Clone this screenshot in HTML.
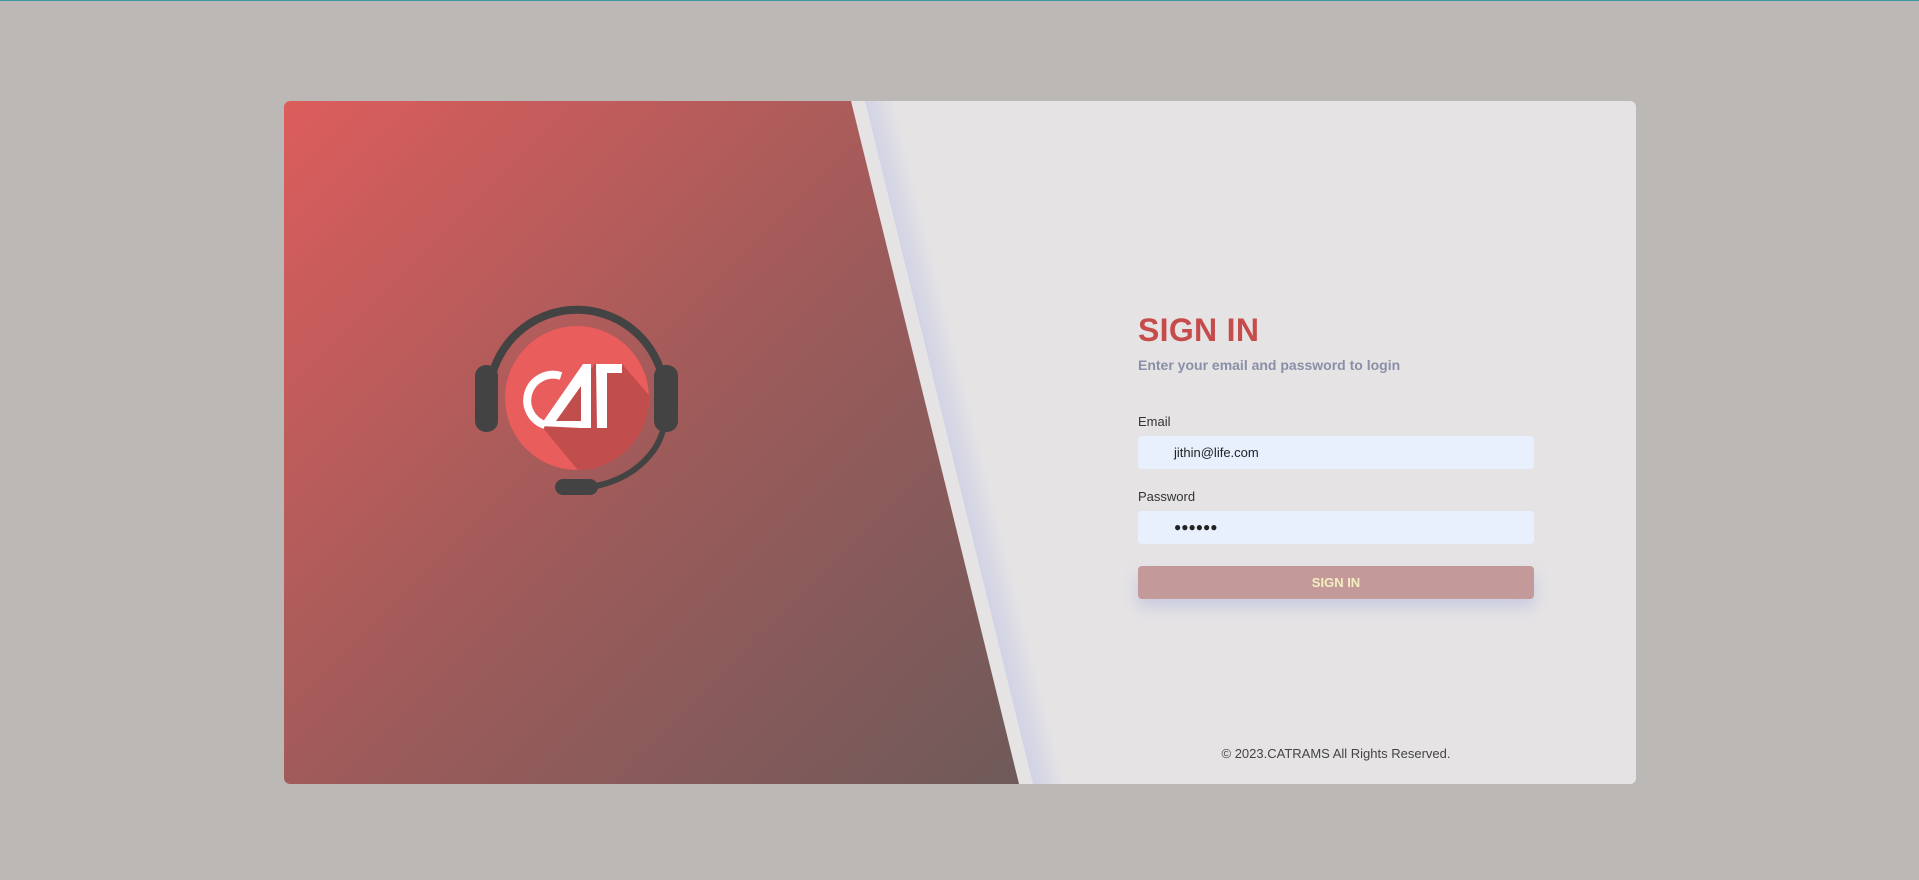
<!DOCTYPE html>
<html><head><meta charset="utf-8"><style>
html,body{margin:0;padding:0}
body{width:1919px;height:880px;background:#bcb8b6;position:relative;overflow:hidden;font-family:"Liberation Sans",sans-serif;border-top:1px solid #3a9aa0;box-sizing:border-box}
.card{position:absolute;left:284px;top:100px;width:1352px;height:683px;background:#e5e3e4;border-radius:6px;overflow:hidden}
.red{position:absolute;left:0;top:0;width:100%;height:100%;background:linear-gradient(135deg,#dc5d5c 0%,#9a5b5a 45%,#5c5a59 100%);background-size:1019px 683px;background-repeat:no-repeat;clip-path:polygon(0 0,567px 0,735px 683px,0 683px)}
.t{position:absolute;left:854px;color:#333}
h1{position:absolute;left:854px;top:211px;margin:0;font-size:32px;font-weight:bold;color:#c64c4c;letter-spacing:.3px}
.sub{top:256px;font-size:14px;font-weight:bold;color:#8a8fa8}
.lbl{font-size:13px;color:#333}
.inp{position:absolute;left:854px;width:396px;height:33px;background:#e8f0fe;border-radius:4px;font-size:13px;color:#222;line-height:33px;box-sizing:border-box;padding-left:36px}
.btn{position:absolute;left:854px;top:465px;width:396px;height:33px;background:#c39999;border-radius:4px;color:#f3efc0;font-weight:bold;font-size:13px;text-align:center;line-height:33px;box-shadow:0 8px 14px rgba(150,160,220,.35)}
.foot{position:absolute;left:854px;width:396px;text-align:center;top:645px;font-size:13px;color:#444}
</style></head><body>
<div class="card">
<svg style="position:absolute;left:0;top:0" width="1352" height="683">
<defs><linearGradient id="sg" gradientUnits="userSpaceOnUse" x1="581" y1="0" x2="609" y2="-7">
<stop offset="0" stop-color="#d2d3e5"/><stop offset="1" stop-color="#e5e3e4"/></linearGradient></defs>
<polygon points="581,0 700,0 868,683 749,683" fill="url(#sg)"/>
</svg>
<div class="red"></div>
<svg style="position:absolute;left:0;top:0" width="700" height="683" viewBox="284 100 700 683">
<defs><clipPath id="cc"><circle cx="577" cy="397" r="72"/></clipPath></defs>
<circle cx="577" cy="397" r="72" fill="#e95d5c"/>
<g clip-path="url(#cc)"><polygon points="543,427 595,363 622,363 680,430 680,520 620,520" fill="#c24d4d"/></g>
<path d="M492,374 A88,88 0 0 1 662,374" fill="none" stroke="#424342" stroke-width="8"/>
<rect x="475" y="364" width="23" height="67" rx="11" fill="#424342"/>
<rect x="654" y="364" width="24" height="67" rx="11" fill="#424342"/>
<path d="M664,425 C658,455 630,478 596,485" fill="none" stroke="#424342" stroke-width="6"/>
<rect x="555" y="478" width="43" height="16" rx="8" fill="#424342"/>
<path d="M561,375 A24,24 0 1 0 545,424" fill="none" stroke="#fff" stroke-width="8"/>
<polygon points="540,425 583,363 591,363 591,427 581,427 581,385 556,420 581,420 581,427" fill="#fff"/>
<polygon points="596,363 622,363 622,372 607,372 607,427 597,427" fill="#fff"/>
</svg>
<h1>SIGN IN</h1>
<div class="t sub">Enter your email and password to login</div>
<div class="t lbl" style="top:313px">Email</div>
<div class="inp" style="top:335px">jithin@life.com</div>
<div class="t lbl" style="top:388px">Password</div>
<div class="inp" style="top:410px;font-size:12px;letter-spacing:0">●●●●●●</div>
<div class="btn">SIGN IN</div>
<div class="foot">© 2023.CATRAMS All Rights Reserved.</div>
</div>
</body></html>
